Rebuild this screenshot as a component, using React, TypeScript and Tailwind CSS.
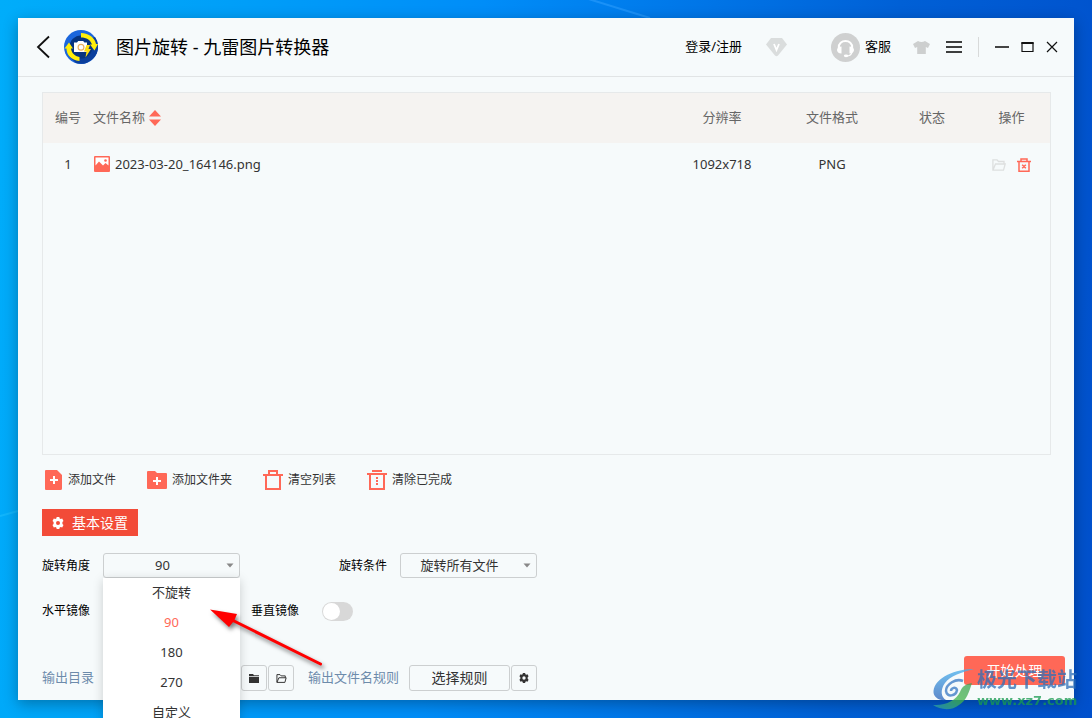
import React, { useState } from 'react';

interface FileItem {
  id: number;
  name: string;
  resolution: string;
  format: string;
}

const files: FileItem[] = [
  { id: 1, name: '2023-03-20_164146.png', resolution: '1092x718', format: 'PNG' },
];

const angles = ['不旋转', '90', '180', '270', '自定义'];

const Logo = () => (
  <svg className="size-[34px]" viewBox="0 0 34 34" aria-hidden="true">
    <circle cx="17" cy="17" r="17" fill="#1b66dc" />
    <path d="M31 7 A17 17 0 0 1 12 33 L5 26 L25 9 Z" fill="#0b3f9c" />
    <circle cx="17" cy="17" r="11.500" fill="#06337f" />
    <path d="M17 3 C25 3 31 8 32 14 L34 14 L30.500 20.500 L26 14.500 L28 14.500 C26.500 10 22.500 7.500 17 7.500 Z" fill="#ffee0a" />
    <path d="M15.500 31 C7 30 2.500 25 2.500 18.500 L0.500 18.500 L5 12.500 L9 18.500 L7 18.500 C7.500 23 10.500 26 15.500 27 Z" fill="#ffee0a" />
    <path d="M10 12.500 h3 l1.200 -1.500 h5 l1.200 1.500 h2.600 v9.500 h-13 z" fill="#fff" />
    <circle cx="17" cy="17.200" r="2.900" fill="#fff" stroke="#e9b062" strokeWidth="1.200" />
    <path d="M22.500 15 L26 15 L24.500 19 L27 19 L21.500 27.500 L22.500 21.500 L20 21.500 Z" fill="#ffdf10" />
  </svg>
);

const HeadsetIcon = () => (
  <svg className="size-[29px]" viewBox="0 0 29 29" aria-hidden="true">
    <circle cx="14.500" cy="14.500" r="14.500" fill="#cfd0d0" />
    <path d="M7.800 15 C7 5.800 22 5.800 21.200 15" fill="none" stroke="#fff" strokeWidth="2" />
    <path d="M10.500 13.500 v7 c-6 0 -6 -7 0 -7z M18.500 13.500 v7 c6 0 6 -7 0 -7z" fill="#fff" />
    <path d="M21 19 C20.500 22 18 23 15.500 23" fill="none" stroke="#fff" strokeWidth="1.300" />
    <ellipse cx="15" cy="22.800" rx="2.200" ry="1.400" fill="#fff" />
  </svg>
);

const GearIcon = ({ className = '' }: { className?: string }) => (
  <svg className={className} viewBox="0 0 12 12" fill="currentColor" aria-hidden="true">
    <path
      fillRule="evenodd"
      d="M4.700 0h2.600l.4 1.500 1 .6 1.500-.5 1.300 2.300L10.400 5v2l1.100 1.100-1.300 2.300-1.500-.5-1 .6-.4 1.500H4.700l-.4-1.500-1-.6-1.500.5L.5 8.100 1.600 7V5L.5 3.900l1.300-2.300 1.500.5 1-.6zM6 4a2 2 0 1 0 0 4a2 2 0 0 0 0-4z"
    />
  </svg>
);

const FolderOpenIcon = ({ className = '' }: { className?: string }) => (
  <svg className={className} viewBox="0 0 14 12" fill="none" stroke="currentColor" strokeWidth="1.300" aria-hidden="true">
    <path d="M12 5 V2.500 H6.500 L5 0.800 H0.900 V11.200 H11.500 L13.200 5 H3.500 L1 11" />
  </svg>
);

const toolbar = [
  {
    label: '添加文件',
    icon: (
      <svg className="size-5" viewBox="0 0 20 20" aria-hidden="true">
        <path d="M3 0h11l5 5v13.500a1.500 1.500 0 0 1-1.500 1.500h-14.500A1 1 0 0 1 2 19V1A1 1 0 0 1 3 0z" fill="#ff6857" />
        <path d="M7 10h8M11 6v8" stroke="#fff" strokeWidth="2" />
      </svg>
    ),
  },
  {
    label: '添加文件夹',
    icon: (
      <svg className="size-5" viewBox="0 0 20 20" aria-hidden="true">
        <path d="M0 2a1 1 0 0 1 1-1h7l2 2h9a1 1 0 0 1 1 1v14a1 1 0 0 1-1 1H1a1 1 0 0 1-1-1z" fill="#ff6857" />
        <path d="M6 11h8M10 7v8" stroke="#fff" strokeWidth="2" />
      </svg>
    ),
  },
  {
    label: '清空列表',
    icon: (
      <svg className="size-5" viewBox="0 0 20 20" fill="none" stroke="#ff6857" strokeWidth="2" aria-hidden="true">
        <path d="M0 5h20M6 5V1h8v4M3 5v14h14V5" />
      </svg>
    ),
  },
  {
    label: '清除已完成',
    icon: (
      <svg className="size-5" viewBox="0 0 20 20" fill="none" stroke="#ff6857" strokeWidth="2" aria-hidden="true">
        <path d="M0 4h20M5 1h10M3 4v15h14V4" />
        <path d="M10 7v8" strokeDasharray="2 1" />
      </svg>
    ),
  },
];

const Header = () => (
  <header className="flex h-[59px] items-center border-b border-[#e1e4e5] pl-[18px] pr-[15px] text-[13px] text-black">
    <button aria-label="返回">
      <svg className="h-6 w-3.5" viewBox="0 0 14 24" fill="none" stroke="#111" strokeWidth="1.800" aria-hidden="true">
        <path d="M13 1.500 L2 12 L13 22.500" />
      </svg>
    </button>
    <div className="ml-3.5 mr-[18px]">
      <Logo />
    </div>
    <h1 className="flex-1 text-lg">图片旋转 - 九雷图片转换器</h1>
    <a href="#login">登录/注册</a>
    <button aria-label="会员" className="ml-6 mr-11">
      <svg className="h-5 w-[21px]" viewBox="0 0 21 20" aria-hidden="true">
        <path d="M5 1h11l5 6.500-9 11q-1.500 1.500-3 0L0 7.500z" fill="#dadddd" />
        <path d="M8 7l2.500 6L13 7" fill="none" stroke="#fff" strokeWidth="1.800" />
      </svg>
    </button>
    <button className="mr-[22px] flex items-center gap-[5px]">
      <HeadsetIcon />
      客服
    </button>
    <button aria-label="皮肤">
      <svg className="h-[13px] w-[17px]" viewBox="0 0 17 13" fill="#cdcfcf" aria-hidden="true">
        <path d="M5 0q3.500 2 7 0l5 3-2 4-2.200-1V13H4.200V6L2 7 0 3z" />
      </svg>
    </button>
    <button aria-label="菜单" className="mx-4">
      <svg className="h-3 w-4" viewBox="0 0 16 12" stroke="#000" strokeWidth="1.600" aria-hidden="true">
        <path d="M0 1h16M0 6h16M0 11h16" />
      </svg>
    </button>
    <span className="mr-4 h-5 w-px bg-[#d8dada]" />
    <div className="flex gap-[11px]">
      <button aria-label="最小化">
        <svg className="size-3.5" viewBox="0 0 14 14" stroke="#444" strokeWidth="2" aria-hidden="true">
          <path d="M0 7h14" />
        </svg>
      </button>
      <button aria-label="最大化">
        <svg className="size-3.5" viewBox="0 0 14 14" fill="none" stroke="#111" aria-hidden="true">
          <path d="M2 2.500V11.500H13V2.500" strokeWidth="1.200" />
          <path d="M1.400 3H13.600" strokeWidth="2" />
        </svg>
      </button>
      <button aria-label="关闭">
        <svg className="size-3.5" viewBox="0 0 14 14" stroke="#111" strokeWidth="1.200" aria-hidden="true">
          <path d="M2 2l10 10M12 2L2 12" />
        </svg>
      </button>
    </div>
  </header>
);

const FileTable = () => (
  <div className="flex-1 border border-[#e6e9ea]">
    <table className="w-full table-fixed text-[13px]">
      <thead className="bg-[#f5f3f1] text-[#666]">
        <tr className="h-[50px] *:font-normal">
          <th className="w-[50px]">编号</th>
          <th className="text-left">
            <button className="flex items-center gap-1">
              文件名称
              <svg className="h-4 w-3" viewBox="0 0 12 16" fill="#ff6857" aria-hidden="true">
                <path d="M6 0l6 6.500H0zM6 16l6-6.500H0z" />
              </svg>
            </button>
          </th>
          <th className="w-[102px]">分辨率</th>
          <th className="w-[118px]">文件格式</th>
          <th className="w-[82px]">状态</th>
          <th className="w-[77px]">操作</th>
        </tr>
      </thead>
      <tbody className="text-[#333]">
        {files.map((file) => (
          <tr key={file.id} className="h-[43px] text-center">
            <td>{file.id}</td>
            <td>
              <div className="flex items-center gap-[5px] pl-px">
                <svg className="size-4" viewBox="0 0 16 16" aria-hidden="true">
                  <rect width="16" height="16" rx="1" fill="#ff6857" />
                  <path d="M1.500 1.500h13v8l-3-2.500-2.500 2.500-4-4-3.500 4z" fill="#fff" />
                  <circle cx="11.500" cy="4.500" r="1.300" fill="#ff6857" />
                </svg>
                {file.name}
              </div>
            </td>
            <td>{file.resolution}</td>
            <td>{file.format}</td>
            <td />
            <td>
              <div className="flex items-center justify-center gap-[11px]">
                <button aria-label="打开文件夹" className="text-[#dddfdf]">
                  <FolderOpenIcon className="h-3 w-3.5" />
                </button>
                <button aria-label="删除">
                  <svg className="size-3.5" viewBox="0 0 14 14" fill="none" stroke="#ff6857" strokeWidth="1.500" aria-hidden="true">
                    <path d="M0 3.500h14M4 3.500V1h6v2.500M2 3.500v9.700h10V3.500M5.200 6.700l3.600 3.600M8.800 6.700l-3.600 3.600" />
                  </svg>
                </button>
              </div>
            </td>
          </tr>
        ))}
      </tbody>
    </table>
  </div>
);

const selectClass =
  'h-[25px] w-full appearance-none rounded-[3px] border border-[#cccfd0] bg-transparent pr-[18px] text-[13px] text-[#333] [text-align-last:center]';

const Caret = () => (
  <svg className="pointer-events-none absolute right-1.5 top-2.5 h-1.5 w-2" viewBox="0 0 8 6" aria-hidden="true">
    <path d="M0.500 0.500h7L4 4.500z" fill="#888" />
  </svg>
);

const toggleClass =
  "h-[19px] w-[31px] appearance-none rounded-full bg-[#d8d8d8] p-px before:block before:size-[17px] before:rounded-full before:bg-white before:content-[''] checked:bg-[#ff6857] checked:before:ml-3";

const iconButtonClass =
  'flex h-[26px] w-[26px] items-center justify-center rounded-[3px] border border-[#cccfd0] text-[#333]';

const Wallpaper = () => (
  <svg className="absolute inset-0" width="1092" height="718" aria-hidden="true">
    <path d="M582 -3L650 18" stroke="#35a2ff" strokeWidth="2" opacity="0.5" />
    <path d="M0 516L18 511" stroke="#22c0ff" strokeWidth="2" opacity="0.5" />
  </svg>
);

const Pointer = () => (
  <svg
    className="pointer-events-none absolute left-[200px] top-[600px] z-20 h-20 w-32 drop-shadow-[2px_3px_2px_rgba(0,0,0,0.5)]"
    viewBox="200 600 128 80"
    aria-hidden="true"
  >
    <path d="M232 620L320.500 664" stroke="#f00" strokeWidth="3" strokeLinecap="round" />
    <path d="M210 609.500L237 614L234 621L229 627Z" fill="#f00" />
  </svg>
);

const Watermark = () => (
  <div className="pointer-events-none absolute bottom-2 right-3 flex items-center gap-0.5 opacity-75">
    <svg className="h-[42px] w-[43px]" viewBox="0 0 43 42" aria-hidden="true">
      <defs>
        <linearGradient id="swirl" x1="0" y1="0" x2="0" y2="1">
          <stop offset="0" stopColor="#45b0ee" />
          <stop offset="1" stopColor="#2b63ba" />
        </linearGradient>
        <linearGradient id="leaf" x1="0" y1="1" x2="1" y2="0">
          <stop offset="0" stopColor="#2b9bb0" />
          <stop offset="0.5" stopColor="#43b54a" />
          <stop offset="1" stopColor="#3f9f55" />
        </linearGradient>
      </defs>
      <path d="M42 1C24 1 3 9 1.500 23C1 29 7 33 14 32C9 29 8 22 13 15C18 8 30 4 42 1Z" fill="url(#swirl)" />
      <path d="M1 37C8 42 20 43 27 37C35 32 37 24 40 15C34 16 30 18 28 24C24 32 14 38 1 37Z" fill="url(#leaf)" />
      <path d="M31 13C24 10 14 16 14 23C15 30 24 28 25 22C24 18 19 20 19 23" fill="none" stroke="#3577c4" strokeWidth="2.500" />
    </svg>
    <div className="w-[103px] whitespace-nowrap font-bold">
      <div className="text-xl leading-6 text-[#2d6fb8]">极光下载站</div>
      <div className="font-['DejaVu_Sans',sans-serif] text-[13px] leading-[18px] text-[#189b50]">www.xz7.com</div>
    </div>
  </div>
);

const App: React.FC = () => {
  const [angle, setAngle] = useState('90');
  const [isOpen, setIsOpen] = useState(true);

  const handleAngleSelect = (value: string) => {
    setAngle(value);
    setIsOpen(false);
  };

  return (
    <div className="relative flex min-h-screen flex-col overflow-hidden bg-[linear-gradient(95deg,#00adfa_0%,#009ff8_20%,#008df8_42%,#0079ea_58%,#0060d6_78%,#0050cc_100%)] p-[18px] font-['Noto_Sans','Noto_Sans_CJK_SC',sans-serif]">
      <Wallpaper />
      <div className="relative flex flex-1 flex-col bg-[#f6fafb] shadow-[0_4px_14px_rgba(0,0,0,0.3)]">
        <Header />

        <main className="flex flex-1 flex-col pl-6 pr-[23px] pt-[15px] text-xs text-black">
          <FileTable />

          {/* Toolbar */}
          <div className="mt-[15px] flex gap-[31px] pl-px">
            {toolbar.map((item) => (
              <button key={item.label} className="flex items-center gap-[5px] text-[#333]">
                {item.icon}
                {item.label}
              </button>
            ))}
          </div>

          <button className="mt-[19px] flex h-[27px] w-24 items-center gap-2 bg-[#f24b38] pl-2.5 text-sm text-white">
            <GearIcon className="size-3" />
            基本设置
          </button>

          {/* Rotation settings */}
          <div className="mt-[17px] flex items-center">
            <label htmlFor="angle" className="w-[61px]">旋转角度</label>
            <div className="relative w-[137px]">
              <select
                id="angle"
                value={angle}
                onChange={(e) => setAngle(e.target.value)}
                className={selectClass}
              >
                {angles.map((value) => (
                  <option key={value}>{value}</option>
                ))}
              </select>
              <Caret />
              {isOpen && (
                <ul className="absolute inset-x-0 top-full z-10 bg-white text-[13px] text-[#333] shadow-[0_2px_10px_rgba(0,0,0,0.18)]">
                  {angles.map((value) => (
                    <li key={value}>
                      <button
                        onClick={() => handleAngleSelect(value)}
                        className={`h-[30px] w-full ${angle === value ? 'text-[#ff6857]' : ''}`}
                      >
                        {value}
                      </button>
                    </li>
                  ))}
                </ul>
              )}
            </div>
            <label htmlFor="condition" className="ml-[99px] w-[61px]">旋转条件</label>
            <div className="relative w-[137px]">
              <select id="condition" className={selectClass}>
                <option>旋转所有文件</option>
              </select>
              <Caret />
            </div>
          </div>

          {/* Mirror settings */}
          <div className="mt-[23px] flex h-5 items-center">
            <label htmlFor="flip-x" className="w-[61px]">水平镜像</label>
            <div className="flex w-[148px]">
              <input id="flip-x" type="checkbox" className={toggleClass} />
            </div>
            <label htmlFor="flip-y" className="w-[71px]">垂直镜像</label>
            <input id="flip-y" type="checkbox" className={toggleClass} />
          </div>
        </main>

        {/* Output */}
        <footer className="mt-[35px] flex h-11 items-start pl-6 pr-[9px] text-[13px] text-[#6d8bab]">
          <div className="flex flex-1 items-center pt-[9px]">
            <label htmlFor="output" className="w-[61px]">输出目录</label>
            <div className="w-[137px]">
              <select id="output" className={selectClass}>
                <option>原文件目录</option>
              </select>
            </div>
            <div className="ml-px flex gap-px">
              <button aria-label="选择目录" className={iconButtonClass}>
                <svg className="h-[9px] w-2.5" viewBox="0 0 10 9" fill="currentColor" aria-hidden="true">
                  <path d="M0 0h4l1 1.300h5v1H0zM0 3h10v6H0z" />
                </svg>
              </button>
              <button aria-label="打开目录" className={iconButtonClass}>
                <FolderOpenIcon className="h-[9px] w-[11px]" />
              </button>
            </div>
            <span className="ml-3.5 w-[101px]">输出文件名规则</span>
            <button className="h-[26px] w-[101px] rounded-[3px] border border-[#cccfd0] text-sm text-[#333]">
              选择规则
            </button>
            <button aria-label="规则设置" className={`ml-px ${iconButtonClass}`}>
              <GearIcon className="size-2.5" />
            </button>
          </div>
          <button className="h-[29px] w-[101px] rounded-[3px] bg-[#ff6857] text-sm text-white">开始处理</button>
        </footer>
      </div>

      <Pointer />
      <Watermark />
    </div>
  );
};

export default App;
